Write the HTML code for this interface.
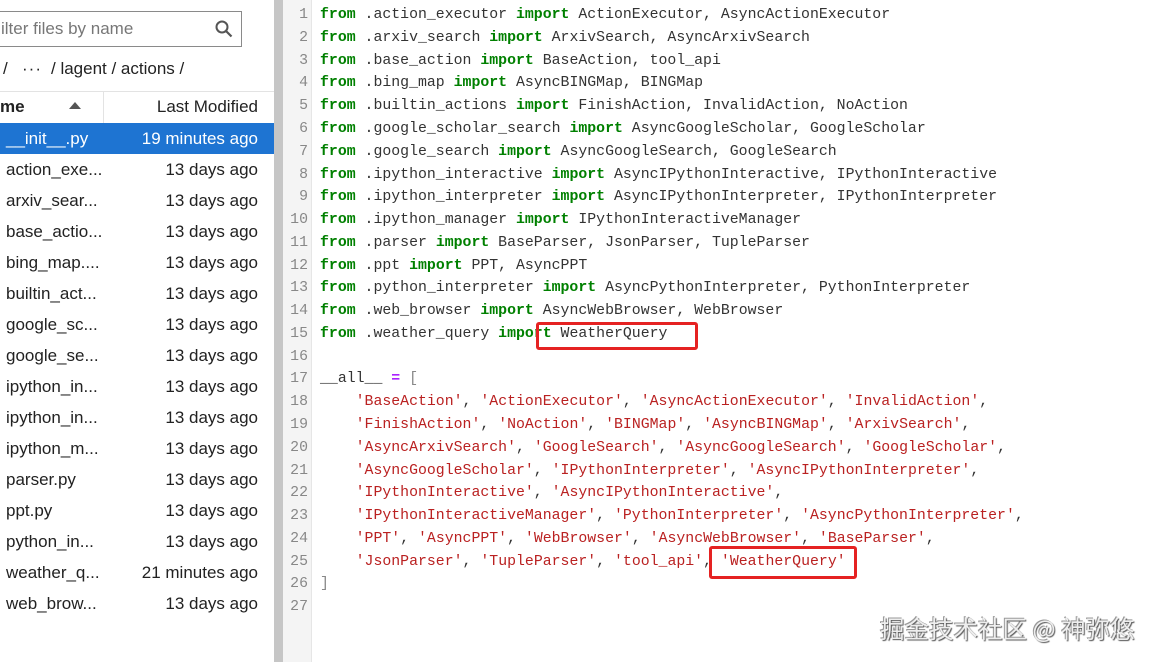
<!DOCTYPE html>
<html><head><meta charset="utf-8"><style>
*{margin:0;padding:0;box-sizing:border-box}
body{width:1159px;height:662px;overflow:hidden;background:#fff;position:relative;font-family:"Liberation Sans",sans-serif;color:#222}
.left{position:absolute;left:0;top:0;width:274px;height:662px;background:#fff}
.search{position:absolute;left:-10px;top:11px;width:252px;height:36px;border:1.5px solid #8a8a8a;background:#fff}
.search span{position:absolute;left:10px;top:7px;font-size:17px;color:#777}
.crumb{position:absolute;left:0;top:59px;font-size:17px;color:#222;white-space:pre}
.hdr{position:absolute;left:0;top:91px;width:274px;height:31px;border-top:1px solid #e3e3e3;font-size:17px}
.hdr .div{position:absolute;left:103px;top:0;width:1px;height:31px;background:#e3e3e3}
.row{position:absolute;left:0;width:274px;height:31px;font-size:17px;line-height:31px}
.row .n{position:absolute;left:6px}
.row .d{position:absolute;right:16px}
.sel{background:#1e74d2;color:#fff}
.sb{position:absolute;left:274px;top:0;width:9px;height:662px;background:#c6c6c6}
.gut{position:absolute;left:283px;top:0;width:29px;height:662px;background:#f4f4f4;border-right:1px solid #e6e6e6}
.ln{position:absolute;left:283px;top:4.2px;width:25px;text-align:right;font-family:"Liberation Mono",monospace;font-size:14.85px;line-height:22.77px;color:#888;white-space:pre}
.code{position:absolute;left:320px;top:4.2px;font-family:"Liberation Mono",monospace;font-size:14.85px;line-height:22.77px;color:#333;white-space:pre}
.k{color:#008000;font-weight:bold}
.s{color:#ba2121}
.o{color:#aa22ff;font-weight:bold}
.p{color:#888}
.box{position:absolute;border:3px solid #e52222;border-radius:3px}
.wm{position:absolute;left:880px;top:611px;font-family:"Noto Sans CJK SC",sans-serif;font-size:24.5px;color:#eee;text-shadow:1px 1px 1px #555,-1px -1px 0 #999;white-space:nowrap}
</style></head><body>
<div class="left">
<div class="search"><span>ilter files by name</span>
<svg style="position:absolute;left:224px;top:8px" width="18" height="18" viewBox="0 0 18 18"><circle cx="7" cy="7" r="5.5" fill="none" stroke="#555" stroke-width="2"/><line x1="11" y1="11" x2="16.5" y2="16.5" stroke="#555" stroke-width="2.2"/></svg></div>
<div class="crumb"><span style="position:absolute;left:3px">/</span><span style="position:absolute;left:22px;letter-spacing:1px">···</span><span style="position:absolute;left:51px">/ lagent / actions /</span></div>
<div class="hdr"><span style="position:absolute;left:0;top:5px;font-weight:bold">me</span>
<svg style="position:absolute;left:69px;top:10px" width="12" height="8"><polygon points="0,7 6,0 12,7" fill="#555"/></svg>
<div class="div"></div><span style="position:absolute;right:16px;top:5px">Last Modified</span></div>
<div class="row sel" style="top:122.5px"><span class="n">__init__.py</span><span class="d">19 minutes ago</span></div>
<div class="row" style="top:153.5px"><span class="n">action_exe...</span><span class="d">13 days ago</span></div>
<div class="row" style="top:184.5px"><span class="n">arxiv_sear...</span><span class="d">13 days ago</span></div>
<div class="row" style="top:215.5px"><span class="n">base_actio...</span><span class="d">13 days ago</span></div>
<div class="row" style="top:246.5px"><span class="n">bing_map....</span><span class="d">13 days ago</span></div>
<div class="row" style="top:277.5px"><span class="n">builtin_act...</span><span class="d">13 days ago</span></div>
<div class="row" style="top:308.5px"><span class="n">google_sc...</span><span class="d">13 days ago</span></div>
<div class="row" style="top:339.5px"><span class="n">google_se...</span><span class="d">13 days ago</span></div>
<div class="row" style="top:370.5px"><span class="n">ipython_in...</span><span class="d">13 days ago</span></div>
<div class="row" style="top:401.5px"><span class="n">ipython_in...</span><span class="d">13 days ago</span></div>
<div class="row" style="top:432.5px"><span class="n">ipython_m...</span><span class="d">13 days ago</span></div>
<div class="row" style="top:463.5px"><span class="n">parser.py</span><span class="d">13 days ago</span></div>
<div class="row" style="top:494.5px"><span class="n">ppt.py</span><span class="d">13 days ago</span></div>
<div class="row" style="top:525.5px"><span class="n">python_in...</span><span class="d">13 days ago</span></div>
<div class="row" style="top:556.5px"><span class="n">weather_q...</span><span class="d">21 minutes ago</span></div>
<div class="row" style="top:587.5px"><span class="n">web_brow...</span><span class="d">13 days ago</span></div>
</div>
<div class="sb"></div><div class="gut"></div>
<div class="ln">1
2
3
4
5
6
7
8
9
10
11
12
13
14
15
16
17
18
19
20
21
22
23
24
25
26
27</div>
<div class="code"><span class="k">from</span> .action_executor <span class="k">import</span> ActionExecutor, AsyncActionExecutor
<span class="k">from</span> .arxiv_search <span class="k">import</span> ArxivSearch, AsyncArxivSearch
<span class="k">from</span> .base_action <span class="k">import</span> BaseAction, tool_api
<span class="k">from</span> .bing_map <span class="k">import</span> AsyncBINGMap, BINGMap
<span class="k">from</span> .builtin_actions <span class="k">import</span> FinishAction, InvalidAction, NoAction
<span class="k">from</span> .google_scholar_search <span class="k">import</span> AsyncGoogleScholar, GoogleScholar
<span class="k">from</span> .google_search <span class="k">import</span> AsyncGoogleSearch, GoogleSearch
<span class="k">from</span> .ipython_interactive <span class="k">import</span> AsyncIPythonInteractive, IPythonInteractive
<span class="k">from</span> .ipython_interpreter <span class="k">import</span> AsyncIPythonInterpreter, IPythonInterpreter
<span class="k">from</span> .ipython_manager <span class="k">import</span> IPythonInteractiveManager
<span class="k">from</span> .parser <span class="k">import</span> BaseParser, JsonParser, TupleParser
<span class="k">from</span> .ppt <span class="k">import</span> PPT, AsyncPPT
<span class="k">from</span> .python_interpreter <span class="k">import</span> AsyncPythonInterpreter, PythonInterpreter
<span class="k">from</span> .web_browser <span class="k">import</span> AsyncWebBrowser, WebBrowser
<span class="k">from</span> .weather_query <span class="k">import</span> WeatherQuery

__all__ <span class="o">=</span> <span class="p">[</span>
    <span class="s">'BaseAction'</span>, <span class="s">'ActionExecutor'</span>, <span class="s">'AsyncActionExecutor'</span>, <span class="s">'InvalidAction'</span>,
    <span class="s">'FinishAction'</span>, <span class="s">'NoAction'</span>, <span class="s">'BINGMap'</span>, <span class="s">'AsyncBINGMap'</span>, <span class="s">'ArxivSearch'</span>,
    <span class="s">'AsyncArxivSearch'</span>, <span class="s">'GoogleSearch'</span>, <span class="s">'AsyncGoogleSearch'</span>, <span class="s">'GoogleScholar'</span>,
    <span class="s">'AsyncGoogleScholar'</span>, <span class="s">'IPythonInterpreter'</span>, <span class="s">'AsyncIPythonInterpreter'</span>,
    <span class="s">'IPythonInteractive'</span>, <span class="s">'AsyncIPythonInteractive'</span>,
    <span class="s">'IPythonInteractiveManager'</span>, <span class="s">'PythonInterpreter'</span>, <span class="s">'AsyncPythonInterpreter'</span>,
    <span class="s">'PPT'</span>, <span class="s">'AsyncPPT'</span>, <span class="s">'WebBrowser'</span>, <span class="s">'AsyncWebBrowser'</span>, <span class="s">'BaseParser'</span>,
    <span class="s">'JsonParser'</span>, <span class="s">'TupleParser'</span>, <span class="s">'tool_api'</span>, <span class="s">'WeatherQuery'</span>
<span class="p">]</span></div>
<div class="box" style="left:536px;top:322px;width:162px;height:28px"></div>
<div class="box" style="left:709px;top:546px;width:148px;height:33px"></div>
<div class="wm">掘金技术社区 @ 神弥悠</div>
</body></html>
